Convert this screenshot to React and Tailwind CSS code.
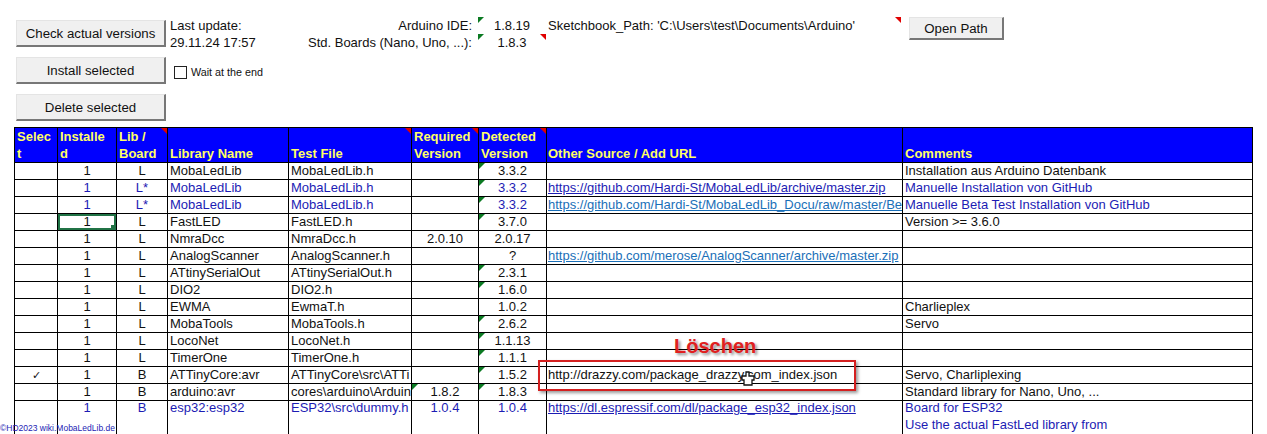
import * as React from 'react'

const BLUE = 'text-[#1c1cb4]'

const rows = [
  { inst: '1', lib: 'L', name: 'MobaLedLib', file: 'MobaLedLib.h', det: '3.3.2', green: true, comment: 'Installation aus Arduino Datenbank' },
  { inst: '1', lib: 'L*', name: 'MobaLedLib', file: 'MobaLedLib.h', det: '3.3.2', green: true, blue: true, url: 'https://github.com/Hardi-St/MobaLedLib/archive/master.zip', comment: 'Manuelle Installation von GitHub' },
  { inst: '1', lib: 'L*', name: 'MobaLedLib', file: 'MobaLedLib.h', det: '3.3.2', green: true, blue: true, url: 'https://github.com/Hardi-St/MobaLedLib_Docu/raw/master/Be', visited: true, comment: 'Manuelle Beta Test Installation von GitHub' },
  { inst: '1', lib: 'L', name: 'FastLED', file: 'FastLED.h', det: '3.7.0', green: true, active: true, comment: 'Version >= 3.6.0' },
  { inst: '1', lib: 'L', name: 'NmraDcc', file: 'NmraDcc.h', req: '2.0.10', det: '2.0.17' },
  { inst: '1', lib: 'L', name: 'AnalogScanner', file: 'AnalogScanner.h', det: '?', url: 'https://github.com/merose/AnalogScanner/archive/master.zip', visited: true },
  { inst: '1', lib: 'L', name: 'ATtinySerialOut', file: 'ATtinySerialOut.h', det: '2.3.1', green: true },
  { inst: '1', lib: 'L', name: 'DIO2', file: 'DIO2.h', det: '1.6.0', green: true },
  { inst: '1', lib: 'L', name: 'EWMA', file: 'EwmaT.h', det: '1.0.2', comment: 'Charlieplex' },
  { inst: '1', lib: 'L', name: 'MobaTools', file: 'MobaTools.h', det: '2.6.2', green: true, comment: 'Servo' },
  { inst: '1', lib: 'L', name: 'LocoNet', file: 'LocoNet.h', det: '1.1.13', green: true },
  { inst: '1', lib: 'L', name: 'TimerOne', file: 'TimerOne.h', det: '1.1.1', green: true },
  { sel: true, inst: '1', lib: 'B', name: 'ATTinyCore:avr', file: 'ATTinyCore\\src\\ATTi', det: '1.5.2', green: true, plain: 'http://drazzy.com/package_drazzy.com_index.json', comment: 'Servo, Charliplexing' },
  { inst: '1', lib: 'B', name: 'arduino:avr', file: 'cores\\arduino\\Arduin', req: '1.8.2', reqGreen: true, det: '1.8.3', green: true, comment: 'Standard library for Nano, Uno, ...' },
]

const Corner = ({ red, right }) => (
  <span
    className={`absolute top-0 border-t-[6px] ${
      right ? 'right-0 border-l-[6px] border-l-transparent' : 'left-0 border-r-[6px] border-r-transparent'
    } ${red ? 'border-t-[#e00000]' : 'border-t-[#0b7a22]'}`}
  />
)

const Btn = ({ children, className = '' }) => (
  <button className={`flex items-center justify-center pt-[2px] bg-[#f0f0f0] border border-[#e4e4e4] border-r-2 border-b-2 border-r-[#777] border-b-[#777] text-[13.25px] text-[#111] ${className}`}>
    {children}
  </button>
)

const Head = ({ children, red, className = 'px-[2px]' }) => (
  <th className={`relative border border-black align-bottom text-left font-bold text-[#ffff66] leading-[17px] ${className}`}>
    {red && <Corner red right />}
    {children}
  </th>
)

const Cell = ({ children, className = '' }) => (
  <td className={`relative border border-black px-[2px] pb-[1px] leading-[14px] overflow-hidden whitespace-nowrap ${className}`}>
    {children}
  </td>
)

const Row = ({ r }) => {
  const color = r.blue ? BLUE : 'text-[#111]'
  return (
    <tr className={`${color} h-[17px]`}>
      <Cell className="text-center text-[11px]">{r.sel ? '✓' : ''}</Cell>
      <Cell className="text-center">
        {r.inst}
        {r.active && (
          <span className="absolute inset-0 border-2 border-[#217346]">
            <span className="absolute -right-[2px] -bottom-[2px] size-[5px] bg-[#217346]" />
          </span>
        )}
      </Cell>
      <Cell className="text-center">{r.lib}</Cell>
      <Cell>{r.name}</Cell>
      <Cell>{r.file}</Cell>
      <Cell className="text-center">
        {r.reqGreen && <Corner />}
        {r.req}
      </Cell>
      <Cell className="text-center">
        {r.green && <Corner />}
        {r.det}
      </Cell>
      <Cell className="!pl-[1px]">
        {r.url && <a className={`underline ${r.visited ? 'text-[#1a6fb8]' : BLUE}`}>{r.url}</a>}
        {r.plain}
      </Cell>
      <Cell>{r.comment}</Cell>
    </tr>
  )
}

export default function App() {
  return (
    <div className="relative h-[434px] overflow-hidden bg-white font-['Liberation_Sans',Arial,sans-serif] text-[13px] text-[#111]">
      <div className="flex h-[127px] pl-4 pt-5">
        <div className="flex flex-col gap-[10px] w-[150px]">
          <Btn className="h-[27px]">Check actual versions</Btn>
          <Btn className="h-[27px]">Install selected</Btn>
          <Btn className="h-[27px]">Delete selected</Btn>
        </div>
        <div className="ml-1 w-[130px]">
          <div className="leading-[17px] -mt-[3px]">Last update:</div>
          <div className="leading-[17px]">29.11.24 17:57</div>
          <div className="flex items-center gap-[4px] ml-[4px] mt-[13px] text-[10.75px]">
            <span className="size-[13px] border border-[#222] bg-white" />
            Wait at the end
          </div>
        </div>
        <div className="w-[172px] text-right -mt-[3px] leading-[17px]">
          <div>Arduino IDE:</div>
          <div>Std. Boards (Nano, Uno, ...):</div>
        </div>
        <div className="w-[68px] ml-[6px] -mt-[3px] leading-[17px] text-center">
          <div className="relative">
            <Corner />
            1.8.19
          </div>
          <div className="relative">
            <Corner />
            <Corner red right />
            1.8.3
          </div>
        </div>
        <div className="w-[353px] ml-[2px] -mt-[3px] leading-[17px] relative">
          Sketchbook_Path: 'C:\Users\test\Documents\Arduino'
          <Corner red right />
        </div>
        <Btn className="ml-2 -mt-[3px] w-[95px] h-[23px]">Open Path</Btn>
      </div>

      <table className="ml-3.5 w-[1238px] table-fixed border-collapse">
        <colgroup>
          <col className="w-[43px]" />
          <col className="w-[59px]" />
          <col className="w-[51px]" />
          <col className="w-[121px]" />
          <col className="w-[123px]" />
          <col className="w-[67px]" />
          <col className="w-[68px]" />
          <col className="w-[356px]" />
          <col className="w-[350px]" />
        </colgroup>
        <thead className="bg-[#0000ff] text-[13px]">
          <tr className="h-[35px]">
            <Head>Selec<br />t</Head>
            <Head>Installe<br />d</Head>
            <Head red>Lib /<br />Board</Head>
            <Head>Library Name</Head>
            <Head red>Test File</Head>
            <Head red>Required<br />Version</Head>
            <Head red>Detected<br />Version</Head>
            <Head className="px-[1px]">Other Source / Add URL</Head>
            <Head>Comments</Head>
          </tr>
        </thead>
        <tbody>
          {rows.map((r, i) => (
            <Row key={i} r={r} />
          ))}
          <tr className={`${BLUE} align-top`}>
            <Cell className="text-center" />
            <Cell className="text-center">1</Cell>
            <Cell className="text-center">B</Cell>
            <Cell>esp32:esp32</Cell>
            <Cell>ESP32\src\dummy.h</Cell>
            <Cell className="text-center">1.0.4</Cell>
            <Cell className="text-center">1.0.4</Cell>
            <Cell className="!pl-[1px]">
              <a className="underline">https://dl.espressif.com/dl/package_esp32_index.json</a>
            </Cell>
            <Cell>
              <div>Board for ESP32</div>
              <div className="mt-[3px] pb-3">Use the actual FastLed library from</div>
            </Cell>
          </tr>
        </tbody>
      </table>

      <div className="absolute left-0 top-[423px] text-[8.5px] leading-[11px] text-[#1c1cb4]">©HD2023 wiki.MobaLedLib.de</div>

      <div className="absolute left-[538px] top-[360px] w-[318px] h-[31px] border-2 border-[#d42020] shadow-[2px_2px_3px_rgba(0,0,0,0.4)]" />
      <div className="absolute left-[674px] top-[335px] text-[20px] leading-[22px] font-bold text-[#e02020] [text-shadow:2px_2px_3px_rgba(0,0,0,0.45)]">Löschen</div>
      <svg className="absolute left-[741px] top-[371px]" width="14" height="16" viewBox="0 0 14 16">
        <path d="M5 1h3v4h5v4h-2v5H3V9H1V5h4z" fill="#fff" stroke="#111" strokeWidth="1.3" />
      </svg>
    </div>
  )
}
